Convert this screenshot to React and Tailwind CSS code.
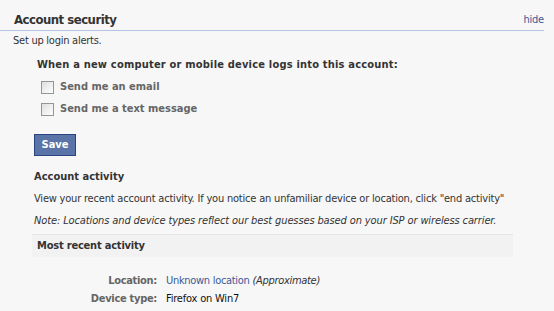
import React from 'react';

const Checkbox = ({ label }) => (
    <label className="flex items-center h-[22px] pl-[41px]">
        <span className="w-[13px] h-[13px] border border-[#959595] bg-gradient-to-br from-[#dedede] via-[#efefef] to-[#fdfdfd]" />
        <span className="ml-[6px] font-bold text-[#666]">{label}</span>
    </label>
);

const App = () => {
    return (
        <div className="h-[311px] overflow-hidden bg-[#f7f7f7] text-[11px] leading-[14px] text-[#333] font-['DejaVu_Sans_Condensed','DejaVu_Sans',sans-serif] [font-stretch:condensed]">
            <div className="w-[544px]">
                {/* Header */}
                <div className="flex items-end justify-between border-b border-[#b4c3e6] pl-[14px] pt-[12px] pb-[2px]">
                    <h2 className="text-[13px] leading-[16px] font-bold tracking-[-0.5px] text-[#333]">Account security</h2>
                    <a className="text-[#3b5998] leading-[14px] pb-[1px] tracking-[-0.2px]">hide</a>
                </div>
                <p className="pl-[13px] mt-[3px] tracking-[-0.25px]">Set up login alerts.</p>

                <p className="pl-[37px] mt-[10px] font-bold tracking-[0.2px]">
                    When a new computer or mobile device logs into this account:
                </p>
                <div className="mt-[4px]">
                    <Checkbox label="Send me an email" />
                    <Checkbox label="Send me a text message" />
                </div>

                <div className="pl-[34px] mt-[14px]">
                    <button className="h-[22px] w-[42px] border border-[#29447e] bg-[#5b74a8] text-white font-bold text-[11px] leading-[18px]">
                        Save
                    </button>
                </div>

                {/* Account activity */}
                <div className="pl-[34px] mt-[14px]">
                    <h3 className="font-bold">Account activity</h3>
                    <p className="mt-[8px] tracking-[-0.2px]">
                        View your recent account activity. If you notice an unfamiliar device or location, click "end activity"
                    </p>
                    <p className="mt-[8px] italic tracking-[-0.12px]">
                        Note: Locations and device types reflect our best guesses based on your ISP or wireless carrier.
                    </p>
                </div>

                <div className="ml-[32px] mr-[31px] mt-[6px] h-[23px] flex items-center border-t border-[#e5e5e5] bg-[#f2f2f2] pl-[5px]">
                    <span className="font-bold tracking-[-0.2px]">Most recent activity</span>
                </div>

                <div className="mt-[17px] grid grid-cols-[157px_1fr] gap-x-[9px] gap-y-[4px]">
                    <span className="text-right font-bold text-[#666] tracking-[-0.3px]">Location:</span>
                    <span className="tracking-[-0.3px]">
                        <a className="text-[#3b5998]">Unknown location</a>{' '}
                        <i className="text-[#333]">(Approximate)</i>
                    </span>
                    <span className="text-right font-bold text-[#666] tracking-[-0.3px]">Device type:</span>
                    <span className="text-[#111] tracking-[-0.2px]">Firefox on Win7</span>
                </div>
            </div>
        </div>
    );
};

export default App;
